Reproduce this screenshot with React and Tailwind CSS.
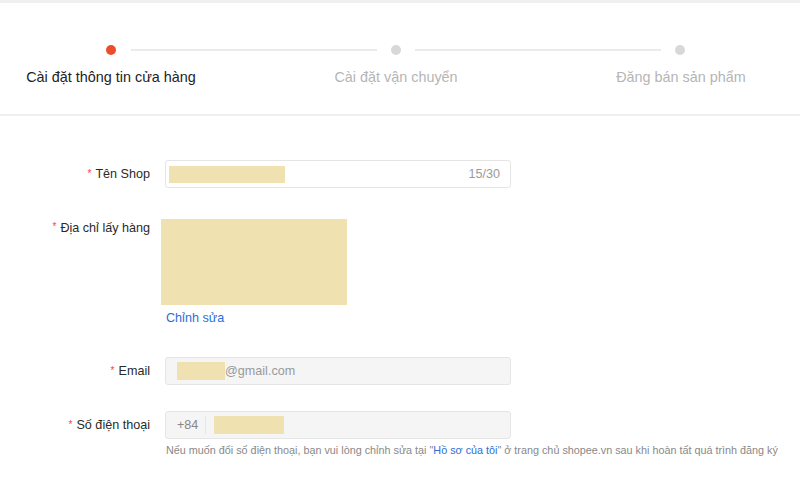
export default function App() {
  const steps = ['Cài đặt thông tin cửa hàng', 'Cài đặt vận chuyển', 'Đăng bán sản phẩm'];

  const Label = ({ children, className = '' }) => (
    <div className={`w-[150px] shrink-0 flex justify-end text-[12.6px] text-[#2a2a2a] ${className}`}>
      <span className="text-[#ee4d2d] text-[10px] mr-[4px] relative top-[-1px]">*</span>
      <span>{children}</span>
    </div>
  );

  return (
    <div className="w-[800px] h-[482px] bg-white overflow-hidden font-['Liberation_Sans',Arial,sans-serif]">
      {/* top band */}
      <div className="h-[3px] bg-[#f0f0f0]" />

      {/* stepper */}
      <div className="pt-[42px] flex items-center pl-[106px]">
        <div className="w-[10px] h-[10px] rounded-full bg-[#ee4d2d]" />
        <div className="ml-[15px] w-[246px] h-[2px] bg-[#ebebeb]" />
        <div className="ml-[14px] w-[10px] h-[10px] rounded-full bg-[#d8d8d8]" />
        <div className="ml-[14px] w-[246px] h-[2px] bg-[#ebebeb]" />
        <div className="ml-[14px] w-[10px] h-[10px] rounded-full bg-[#d8d8d8]" />
      </div>
      <div className="mt-[13px] flex pl-[26px] gap-[115px]">
        {steps.map((s, i) => (
          <div
            key={s}
            className={`w-[170px] text-center whitespace-nowrap text-[14.4px] leading-[18px] ${i === 0 ? 'text-[#222]' : 'text-[#b5b5b5]'}`}
          >
            {s}
          </div>
        ))}
      </div>
      <div className="mt-[28px] h-[2px] bg-[#efefef]" />

      {/* form */}
      <div className="pt-[44px]">
        <div className="flex">
          <Label className="h-[28px] items-center">Tên Shop</Label>
          <div className="ml-[15px] w-[346px] h-[28px] border border-[#e5e5e5] rounded-[3px] flex items-center justify-between pl-[3px] pr-[10px]">
            <div className="w-[116px] h-[17px] bg-[#efe2b0]" />
            <span className="text-[12.6px] text-[#999]">15/30</span>
          </div>
        </div>

        <div className="mt-[31px] flex items-start">
          <Label className="leading-[18px]">Địa chỉ lấy hàng</Label>
          <div className="ml-[11px]">
            <div className="w-[186px] h-[86px] bg-[#efe2b0]" />
            <a href="#" className="block ml-[5px] mt-[6px] text-[12.6px] leading-[14px] text-[#2d6ed6]">
              Chỉnh sửa
            </a>
          </div>
        </div>

        <div className="mt-[32px] flex">
          <Label className="h-[28px] items-center">Email</Label>
          <div className="ml-[15px] w-[346px] h-[28px] border border-[#e5e5e5] bg-[#f5f5f5] rounded-[3px] flex items-center pl-[11px]">
            <div className="w-[48px] h-[18px] bg-[#efe2b0]" />
            <span className="text-[12.6px] text-[#999]">@gmail.com</span>
          </div>
        </div>

        <div className="mt-[26px] flex">
          <Label className="h-[28px] items-center">Số điện thoại</Label>
          <div className="ml-[15px] w-[346px] h-[28px] border border-[#e5e5e5] bg-[#f5f5f5] rounded-[3px] flex items-center pl-[11px]">
            <span className="text-[12.6px] text-[#888]">+84</span>
            <div className="ml-[7px] w-px h-[18px] bg-[#e6e6e6]" />
            <div className="ml-[8px] w-[70px] h-[18px] bg-[#efe2b0]" />
          </div>
        </div>
        <p className="ml-[166px] mt-[4px] text-[10.8px] leading-[14px] text-[#888] whitespace-nowrap">
          Nếu muốn đổi số điện thoại, bạn vui lòng chỉnh sửa tại "
          <a href="#" className="text-[#2d6ed6]">Hồ sơ của tôi</a>
          " ở trang chủ shopee.vn sau khi hoàn tất quá trình đăng ký
        </p>
      </div>
    </div>
  );
}
